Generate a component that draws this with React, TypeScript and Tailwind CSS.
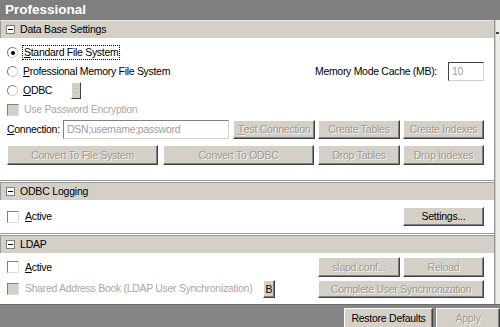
import React from "react";

// classic 3D button
function Btn({
    label,
    w,
    h = "h-[19px]",
    disabled = true,
    u,
}: {
    label: string;
    w: string;
    h?: string;
    disabled?: boolean;
    u?: number;
}) {
    const text =
        u === undefined ? (
            label
        ) : (
            <>
                {label.slice(0, u)}
                <span className="underline">{label[u]}</span>
                {label.slice(u + 1)}
            </>
        );
    return (
        <div
            className={`${w} ${h} shrink-0 flex items-center justify-center bg-[#d4d0c8] border border-t-white border-l-white border-b-[#404040] border-r-[#404040] shadow-[inset_-1px_-1px_0_#808080] text-[10.5px] tracking-[-0.25px] leading-none whitespace-nowrap ${
                disabled ? "text-[#a09c94] [text-shadow:1px_1px_0_#f4f2ee]" : "text-black"
            }`}
        >
            {text}
        </div>
    );
}

function Radio({ checked = false }: { checked?: boolean }) {
    return (
        <span className="w-[11px] h-[11px] shrink-0 rounded-full border border-t-[#808080] border-l-[#808080] border-b-[#d4d0c8] border-r-[#d4d0c8] bg-white flex items-center justify-center">
            {checked && <span className="w-[4px] h-[4px] rounded-full bg-black" />}
        </span>
    );
}

function Check({ disabled = false }: { disabled?: boolean }) {
    return (
        <span
            className={`w-[12px] h-[12px] shrink-0 border border-t-[#808080] border-l-[#808080] border-b-[#e0ddd6] border-r-[#e0ddd6] ${
                disabled ? "bg-[#d4d0c8]" : "bg-white"
            }`}
        />
    );
}

function Header({ title, first = false }: { title: string; first?: boolean }) {
    return (
        <div className="flex flex-col">
            {first ? (
                <div className="h-[1px] bg-[#e6e4df]" />
            ) : (
                <div className="h-[3px] border-y border-[#9a9a9a] bg-white" />
            )}
            <div className="h-[17px] flex items-center bg-[#d4d0c8] border-l border-[#9a9a9a] pl-[5px] gap-[5px]">
                <span className="w-[9px] h-[9px] border border-[#808080] bg-white flex items-center justify-center">
                    <span className="w-[5px] h-[1px] bg-black" />
                </span>
                <span className="text-[10.5px] tracking-[-0.2px] text-black">{title}</span>
            </div>
        </div>
    );
}

export default function App() {
    return (
        <div className="w-[500px] h-[327px] overflow-hidden bg-[#858585] flex flex-col font-['Liberation_Sans',Arial,sans-serif]">
            {/* title */}
            <div className="h-[20px] shrink-0 flex items-center px-[5px] bg-[#7f7f7f]">
                <span className="text-white font-bold text-[13.5px] leading-none">Professional</span>
            </div>

            <div className="flex h-[284px] shrink-0">
                <div className="w-[495px] bg-white border-r border-[#9a9a9a] flex flex-col">
                    {/* Data Base Settings */}
                    <Header title="Data Base Settings" first />
                    <div className="flex flex-col pl-[7px] pr-[10px] pt-[5px] text-[10.5px] tracking-[-0.3px] text-black whitespace-nowrap">
                        <div className="h-[19px] flex items-center gap-[4px]">
                            <Radio checked />
                            <span className="border border-dotted border-black px-[1px] leading-[13px]">
                                <span className="underline">S</span>tandard File System
                            </span>
                        </div>
                        <div className="h-[19px] flex items-center gap-[5px]">
                            <Radio />
                            <span>
                                <span className="underline">P</span>rofessional Memory File System
                            </span>
                            <span className="ml-auto mr-[6px]">Memory Mode Cache (MB):</span>
                            <div className="w-[36px] h-[19px] border border-t-[#404040] border-l-[#404040] border-b-[#d4d0c8] border-r-[#d4d0c8] flex items-center pl-[3px] text-[#a0a0a0]">
                                10
                            </div>
                        </div>
                        <div className="h-[19px] flex items-center gap-[5px]">
                            <Radio />
                            <span>
                                <span className="underline">O</span>DBC
                            </span>
                            <div className="ml-[14px] w-[10px] h-[17px] bg-[#d4d0c8] border border-t-white border-l-white border-b-[#404040] border-r-[#404040] flex items-center justify-center text-[#a09c94] text-[9px]">
                                :
                            </div>
                        </div>
                        <div className="h-[20px] flex items-center gap-[5px] text-[#a8a8a8]">
                            <Check disabled />
                            <span>Use Password Encryption</span>
                        </div>
                        <div className="h-[19px] flex items-center">
                            <span className="w-[56px]">
                                <span className="underline">C</span>onnection:
                            </span>
                            <div className="w-[166px] h-[19px] border border-t-[#808080] border-l-[#808080] border-b-[#d4d0c8] border-r-[#d4d0c8] flex items-center pl-[3px] text-[#a0a0a0]">
                                DSN;username;password
                            </div>
                            <div className="ml-[4px] flex gap-[3px]">
                                <Btn label="Test Connection" w="w-[82px]" u={0} />
                                <Btn label="Create Tables" w="w-[82px]" />
                                <Btn label="Create Indexes" w="w-[81px]" />
                            </div>
                        </div>
                        <div className="h-[20px] mt-[6px] flex items-center">
                            <Btn label="Convert To File System" w="w-[151px]" h="h-[20px]" />
                            <div className="ml-[5px]">
                                <Btn label="Convert To ODBC" w="w-[151px]" h="h-[20px]" />
                            </div>
                            <div className="ml-[4px] flex gap-[3px]">
                                <Btn label="Drop Tables" w="w-[82px]" h="h-[20px]" />
                                <Btn label="Drop Indexes" w="w-[81px]" h="h-[20px]" />
                            </div>
                        </div>
                    </div>
                    <div className="h-[15px]" />

                    {/* ODBC Logging */}
                    <Header title="ODBC Logging" />
                    <div className="flex items-center pl-[7px] pr-[10px] pt-[1px] h-[32px] text-[10.5px] tracking-[-0.3px] text-black">
                        <Check />
                        <span className="ml-[6px]">
                            <span className="underline">A</span>ctive
                        </span>
                        <div className="ml-auto">
                            <Btn label="Settings..." w="w-[81px]" disabled={false} />
                        </div>
                    </div>
                    <div className="h-[1px]" />

                    {/* LDAP */}
                    <Header title="LDAP" />
                    <div className="flex flex-col pl-[7px] pr-[10px] pt-[4px] text-[10.5px] tracking-[-0.3px] text-black whitespace-nowrap">
                        <div className="h-[20px] flex items-center">
                            <Check />
                            <span className="ml-[6px] mt-[2px]">
                                <span className="underline">A</span>ctive
                            </span>
                            <div className="ml-auto flex gap-[3px]">
                                <Btn label="slapd.conf..." w="w-[82px]" h="h-[20px]" />
                                <Btn label="Reload" w="w-[81px]" h="h-[20px]" />
                            </div>
                        </div>
                        <div className="h-[18px] mt-[3px] flex items-center text-[#a8a8a8]">
                            <Check disabled />
                            <span className="ml-[6px]">Shared Address Book (LDAP User Synchronization)</span>
                            <div className="ml-auto mr-[43px]">
                                <Btn label="B" w="w-[12px]" h="h-[18px]" disabled={false} />
                            </div>
                            <Btn label="Complete User Synchronization" w="w-[166px]" h="h-[18px]" />
                        </div>
                    </div>
                </div>
                {/* scroll strip */}
                <div className="flex-1 bg-[#ecebe8] border-l border-[#c8c8c8] flex flex-col">
                    <div className="h-[12px]" />
                    <div className="w-[3px] h-[2px] bg-[#404040]" />
                </div>
            </div>

            {/* bottom bar */}
            <div className="flex-1 flex justify-end items-start pt-[3px] gap-[3px] border-t border-[#6a6a6a]">
                <Btn label="Restore Defaults" w="w-[89px]" h="h-[21px]" disabled={false} />
                <Btn label="Apply" w="w-[64px]" h="h-[21px]" />
            </div>
        </div>
    );
}
